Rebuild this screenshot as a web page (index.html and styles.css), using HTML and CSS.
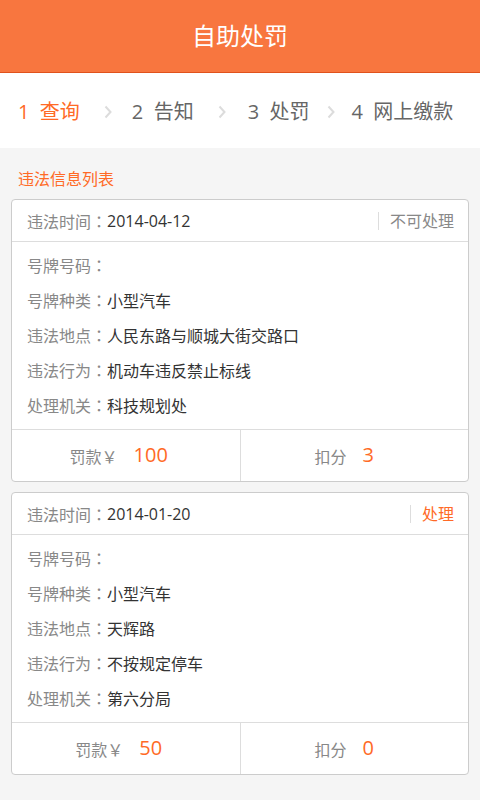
FILE: index.html
```html
<!DOCTYPE html>
<html>
<head lang="zh-CN">
    <meta charset="UTF-8">
    <title>自助处罚</title>
    <link rel="stylesheet" href="styles.css">
</head>
<body>
<div class="header">自助处罚</div>
<ul class="steps">
    <li class="step active">1&nbsp; 查询</li>
    <li class="arrow"><svg width="8" height="14" viewBox="0 0 8 14"><polyline points="1.5,1.5 6.5,7 1.5,12.5" fill="none" stroke="#dcdcdc" stroke-width="2"/></svg></li>
    <li class="step">2&nbsp; 告知</li>
    <li class="arrow"><svg width="8" height="14" viewBox="0 0 8 14"><polyline points="1.5,1.5 6.5,7 1.5,12.5" fill="none" stroke="#dcdcdc" stroke-width="2"/></svg></li>
    <li class="step">3&nbsp; 处罚</li>
    <li class="arrow"><svg width="8" height="14" viewBox="0 0 8 14"><polyline points="1.5,1.5 6.5,7 1.5,12.5" fill="none" stroke="#dcdcdc" stroke-width="2"/></svg></li>
    <li class="step">4&nbsp; 网上缴款</li>
</ul>
<div class="content">
    <h3 class="listTitle">违法信息列表</h3>

    <div class="card">
        <div class="cardHead">
            <span class="label">违法时间<i>：</i></span><span class="value">2014-04-12</span>
            <span class="status">不可处理</span>
        </div>
        <ul class="cardBody">
            <li><span class="label">号牌号码<i>：</i></span><span class="value"></span></li>
            <li><span class="label">号牌种类<i>：</i></span><span class="value">小型汽车</span></li>
            <li><span class="label">违法地点<i>：</i></span><span class="value">人民东路与顺城大街交路口</span></li>
            <li><span class="label">违法行为<i>：</i></span><span class="value">机动车违反禁止标线</span></li>
            <li><span class="label">处理机关<i>：</i></span><span class="value">科技规划处</span></li>
        </ul>
        <div class="cardFoot">
            <div class="cell"><span class="label">罚款￥</span><span class="num">100</span></div>
            <div class="cell"><span class="label">扣分</span><span class="num">3</span></div>
        </div>
    </div>

    <div class="card">
        <div class="cardHead">
            <span class="label">违法时间<i>：</i></span><span class="value">2014-01-20</span>
            <span class="status can">处理</span>
        </div>
        <ul class="cardBody">
            <li><span class="label">号牌号码<i>：</i></span><span class="value"></span></li>
            <li><span class="label">号牌种类<i>：</i></span><span class="value">小型汽车</span></li>
            <li><span class="label">违法地点<i>：</i></span><span class="value">天辉路</span></li>
            <li><span class="label">违法行为<i>：</i></span><span class="value">不按规定停车</span></li>
            <li><span class="label">处理机关<i>：</i></span><span class="value">第六分局</span></li>
        </ul>
        <div class="cardFoot">
            <div class="cell"><span class="label">罚款￥</span><span class="num">50</span></div>
            <div class="cell"><span class="label">扣分</span><span class="num">0</span></div>
        </div>
    </div>
</div>
</body>
</html>
```

FILE: styles.css
```css
*{
    padding: 0;
    margin: 0;
}
body{
    background-color: #f5f5f5;
    font-family: "Open Sans", "Noto Sans CJK SC", sans-serif;
    color: #333;
}
ul{
    list-style: none;
}
.header{
    height: 72px;
    line-height: 72px;
    background-color: #f8763f;
    border-bottom: 1px solid #e0521c;
    color: #fff;
    font-size: 24px;
    text-align: center;
}
.steps{
    display: flex;
    align-items: center;
    height: 75px;
    padding: 0 0 0 18px;
    background-color: #fff;
}
.step{
    font-size: 20px;
    color: #666;
    white-space: nowrap;
}
.step.active{
    color: #ff6a26;
}
.arrow{
    display: flex;
    padding-top: 2px;
    margin: 0 20px 0 24px;
}
.arrow:nth-child(4){
    margin: 0 22px 0 24px;
}
.arrow:nth-child(6){
    margin: 0 16px 0 18px;
}
.content{
    padding: 0 11px 20px;
}
.listTitle{
    font-size: 16px;
    font-weight: normal;
    color: #ff6a26;
    line-height: 20px;
    padding: 21px 0 10px 7px;
}
.card{
    background-color: #fff;
    border: 1px solid #ccc;
    border-radius: 4px;
    margin-bottom: 10px;
    font-size: 16px;
}
.label{
    color: #888;
}
/* 全角冒号居中 */
.label i{
    font-style: normal;
    font-family: "Noto Sans CJK TC", sans-serif;
}
.value{
    color: #333;
}
.cardHead{
    display: flex;
    align-items: center;
    height: 41px;
    padding: 0 14px 0 15px;
    border-bottom: 1px solid #ddd;
}
.status{
    margin-left: auto;
    padding-left: 11px;
    border-left: 1px solid #ddd;
    line-height: 18px;
    color: #888;
}
.status.can{
    color: #ff6a26;
}
.cardBody{
    padding: 6px 15px;
    border-bottom: 1px solid #ddd;
}
.cardBody li{
    line-height: 35px;
    height: 35px;
}
.cardFoot{
    display: flex;
    height: 51px;
}
.cell{
    flex: 1;
    display: flex;
    justify-content: center;
    align-items: center;
    padding-right: 20px;
}
.cell:first-child{
    border-right: 1px solid #ddd;
    padding: 0 17px 0 3px;
}
.num{
    margin-left: 16px;
    font-size: 20px;
    color: #ff6a26;
    position: relative;
    top: -1px;
}
```
